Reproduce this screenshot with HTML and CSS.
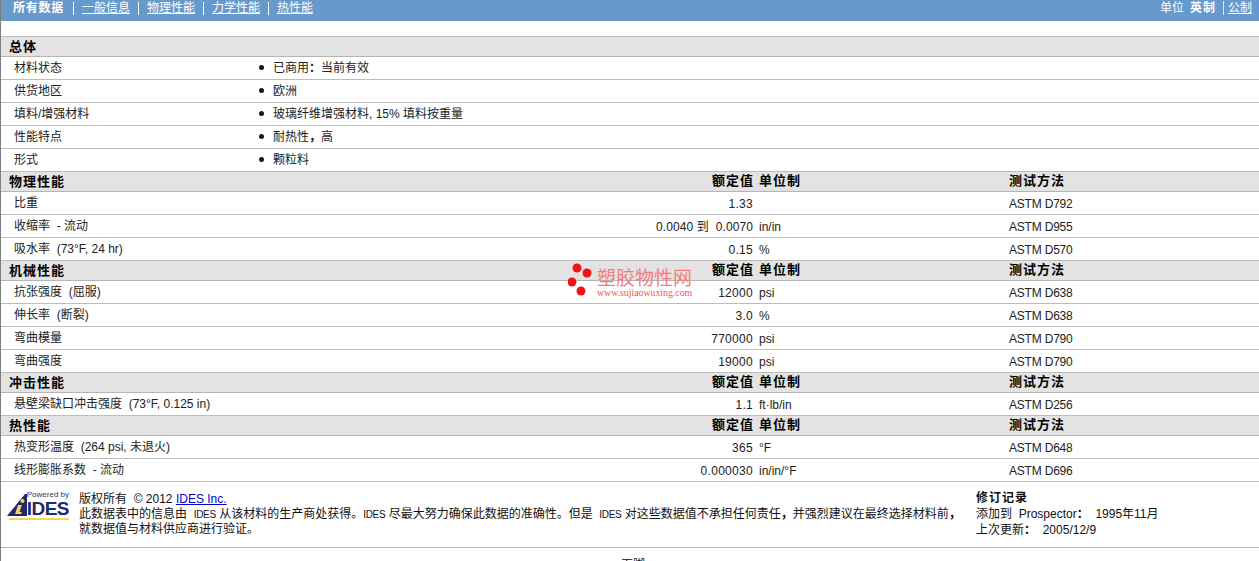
FILE: index.html
```html
<!DOCTYPE html>
<html lang="zh">
<head>
<meta charset="utf-8">
<title>材料数据表</title>
<link rel="stylesheet" href="styles.css">
</head>
<body>
<div class="page">
  <header class="topbar">
    <nav class="tabs">
      <span class="tab-current">所有数据</span>
      <a href="#">一般信息</a>
      <a href="#">物理性能</a>
      <a href="#">力学性能</a>
      <a href="#">热性能</a>
    </nav>
    <div class="units">
      <span>单位</span>
      <b>英制</b>
      <a href="#">公制</a>
    </div>
  </header>

  <section class="sheet">
    <div class="sec"><b>总体</b></div>
    <div class="row info"><span class="lab">材料状态</span><span class="bul"></span><span>已商用<span class="pun">：</span>当前有效</span></div>
    <div class="row info"><span class="lab">供货地区</span><span class="bul"></span><span>欧洲</span></div>
    <div class="row info"><span class="lab">填料/增强材料</span><span class="bul"></span><span>玻璃纤维增强材料, 15% 填料按重量</span></div>
    <div class="row info"><span class="lab">性能特点</span><span class="bul"></span><span>耐热性<span class="pun">，</span>高</span></div>
    <div class="row info"><span class="lab">形式</span><span class="bul"></span><span>颗粒料</span></div>

    <div class="sec cols"><b>物理性能</b><b class="val">额定值</b><b>单位制</b><b>测试方法</b></div>
    <div class="row cols"><span class="lab">比重</span><span class="val">1.33</span><span></span><span class="method">ASTM D792</span></div>
    <div class="row cols"><span class="lab">收缩率 &nbsp;- 流动</span><span class="val range">0.0040 到 &nbsp;0.0070</span><span>in/in</span><span class="method">ASTM D955</span></div>
    <div class="row cols"><span class="lab">吸水率 &nbsp;(73°F, 24 hr)</span><span class="val">0.15</span><span>%</span><span class="method">ASTM D570</span></div>

    <div class="sec cols"><b>机械性能</b><b class="val">额定值</b><b>单位制</b><b>测试方法</b></div>
    <div class="row cols"><span class="lab">抗张强度 &nbsp;(屈服)</span><span class="val">12000</span><span>psi</span><span class="method">ASTM D638</span></div>
    <div class="row cols"><span class="lab">伸长率 &nbsp;(断裂)</span><span class="val">3.0</span><span>%</span><span class="method">ASTM D638</span></div>
    <div class="row cols"><span class="lab">弯曲模量</span><span class="val">770000</span><span>psi</span><span class="method">ASTM D790</span></div>
    <div class="row cols"><span class="lab">弯曲强度</span><span class="val">19000</span><span>psi</span><span class="method">ASTM D790</span></div>

    <div class="sec cols"><b>冲击性能</b><b class="val">额定值</b><b>单位制</b><b>测试方法</b></div>
    <div class="row cols"><span class="lab">悬壁梁缺口冲击强度 &nbsp;(73°F, 0.125 in)</span><span class="val">1.1</span><span>ft·lb/in</span><span class="method">ASTM D256</span></div>

    <div class="sec cols"><b>热性能</b><b class="val">额定值</b><b>单位制</b><b>测试方法</b></div>
    <div class="row cols"><span class="lab">热变形温度 &nbsp;(264 psi, 未退火)</span><span class="val">365</span><span>°F</span><span class="method">ASTM D648</span></div>
    <div class="row cols"><span class="lab">线形膨胀系数 &nbsp;- 流动</span><span class="val">0.000030</span><span>in/in/°F</span><span class="method">ASTM D696</span></div>
  </section>

  <footer class="foot">
    <div class="logo">
      <svg class="logo-mark" width="22" height="26" viewBox="0 0 22 26" aria-hidden="true">
        <path d="M0 23 L18 1 L20 1 L20 23 Z" fill="#1f2a6b"/>
        <circle cx="15.500" cy="8" r="2" fill="#f4d35e"/>
        <path d="M8 21 L11 12 L15 12 L12.500 19 L15 19 L14 21 Z" fill="#f4d35e"/>
      </svg>
      <div class="logo-text">
        <span class="powered">Powered by</span>
        <span class="ides">IDES</span>
      </div>
    </div>
    <div class="legal">
      <p>版权所有 &nbsp;© 2012 <a href="#">IDES Inc.</a></p>
      <p>此数据表中的信息由 &nbsp;<span class="brand">IDES</span> 从该材料的生产商处获得。<span class="brand">IDES</span> 尽最大努力确保此数据的准确性。但是 &nbsp;<span class="brand">IDES</span> 对这些数据值不承担任何责任<span class="pun">，</span>并强烈建议在最终选择材料前<span class="pun">，</span></p>
      <p>就数据值与材料供应商进行验证。</p>
    </div>
    <div class="rev">
      <p><b>修订记录</b></p>
      <p>添加到 &nbsp;Prospector<span class="pun">：</span> &nbsp;1995年11月</p>
      <p>上次更新<span class="pun">：</span> &nbsp;2005/12/9</p>
    </div>
  </footer>
  <div class="tail">页脚</div>

  <div class="mark">
    <svg width="28" height="33" viewBox="0 0 28 33" aria-hidden="true">
      <circle cx="9" cy="5" r="4.500" fill="#f21414"/>
      <circle cx="19" cy="10" r="4.500" fill="#f21414"/>
      <circle cx="4" cy="19" r="4.500" fill="#f21414"/>
      <circle cx="13" cy="28" r="4.500" fill="#f21414"/>
    </svg>
    <div class="mark-text">
      <span class="mark-cn">塑胶物性网</span>
      <span class="mark-en">www.sujiaowuxing.com</span>
    </div>
  </div>
</div>
</body>
</html>
```

FILE: styles.css
```css
* { box-sizing: border-box; }
html, body { margin: 0; padding: 0; height: 561px; overflow: hidden; background: #fff; }
body {
  font-family: "Liberation Sans", "Noto Sans CJK SC", sans-serif;
  font-size: 12px;
  line-height: 14px;
  color: #111;
}
p { margin: 0; }
a { color: inherit; }
.pun { font-family: "Noto Sans CJK TC", sans-serif; font-weight: 700; line-height: 0; }

.page {
  position: relative;
  height: 561px;
  overflow: hidden;
  border-left: 1px solid #7f7f7f;
}

.topbar {
  height: 21px;
  margin-left: -1px;
  padding: 1px 7px 0 13px;
  display: flex;
  justify-content: space-between;
  background: #6699cc;
  color: #fff;
}
.tabs { display: flex; }
.tabs > * { height: 14px; line-height: 14px; }
.tab-current { font-weight: 700; padding-right: 9px; letter-spacing: 0.750px; }
.tabs a { padding: 0 8px 0 9px; position: relative; }
.tabs a::before {
  content: "";
  position: absolute;
  left: 0;
  top: 1px;
  width: 1px;
  height: 13px;
  background: #fff;
}
.units { display: flex; gap: 6px; }
.units b { letter-spacing: 1px; margin-right: 1px; }
.units a { border-left: 1px solid #dfe8f2; padding-left: 4px; height: 14px; }

.sheet {
  margin-top: 15px;
  border-top: 1px solid #bdbdbd;
}
.sec {
  height: 20px;
  padding: 3px 0 0 8px;
  background: #e3e3e3;
  border-bottom: 1px solid #b5b5b5;
  color: #000;
  font-size: 13px;
  letter-spacing: 1px;
}
.sec.cols > :not(:first-child) { margin-top: -1px; }
.row {
  height: 23px;
  border-bottom: 1px solid #bdbdbd;
  padding: 4px 0 0 13px;
  color: #222;
}
.info { display: grid; grid-template-columns: 245px 14px 1fr; }
.bul { position: relative; }
.bul::before {
  content: "";
  position: absolute;
  left: 0;
  top: 4px;
  width: 5px;
  height: 5px;
  border-radius: 50%;
  background: #1a1030;
}
.cols {
  display: grid;
  grid-template-columns: 739px 6px 250px 1fr;
}
.sec.cols { grid-template-columns: 744px 6px 250px 1fr; }
.cols > :nth-child(2) { grid-column: 1; grid-row: 1; justify-self: end; }
.cols > :nth-child(1) { grid-column: 1; grid-row: 1; justify-self: start; }
.cols > :nth-child(3) { grid-column: 3; }
.cols > :nth-child(4) { grid-column: 4; }
.row.cols { padding-top: 5px; }
.row.cols > .lab { margin-top: -1px; }
.val { text-align: right; }
.row .val { letter-spacing: 0.300px; }
.row .range { letter-spacing: 0.100px; }
.sec .val { margin-right: -1px; }
.method { letter-spacing: -0.200px; }

.foot {
  height: 66px;
  padding: 10px 0 0 6px;
  display: flex;
  border-bottom: 1px solid #b5b5b5;
}
.logo { width: 72px; display: flex; align-items: flex-end; height: 28px; position: relative; }
.logo-mark { flex: none; position: absolute; left: 0; top: 1px; }
.logo-text { display: flex; flex-direction: column; margin-left: 20px; align-items: flex-end; width: 42px; }
.powered { font-size: 8px; line-height: 10px; color: #2a3a70; white-space: nowrap; }
.ides {
  font-size: 19px;
  line-height: 18px;
  font-weight: 700;
  color: #1f2a6b;
  border-bottom: 2px solid #f4d35e;
  letter-spacing: -0.500px;
  width: 60px;
  margin-left: -18px;
  text-align: right;
}
.legal { width: 897px; color: #111; }
.legal p + p { margin-top: 0.500px; }
.legal a { color: #0000cc; }
.brand { font-size: 10px; letter-spacing: -0.300px; }
.rev { line-height: 16px; margin-top: -2px; }
.rev b { letter-spacing: 1px; }

.tail {
  position: absolute;
  left: 620px;
  top: 558px;
  line-height: 14px;
}

.mark {
  position: absolute;
  left: 567px;
  top: 263px;
  display: flex;
  gap: 1px;
  pointer-events: none;
}
.mark-text { display: flex; flex-direction: column; padding-top: 5px; }
.mark-cn {
  font-size: 19px;
  line-height: 21px;
  color: #f47c7c;
  white-space: nowrap;
}
.mark-en {
  font-family: "Liberation Serif", serif;
  font-size: 9.800px;
  line-height: 8px;
  color: #ee5555;
  white-space: nowrap;
}
```
